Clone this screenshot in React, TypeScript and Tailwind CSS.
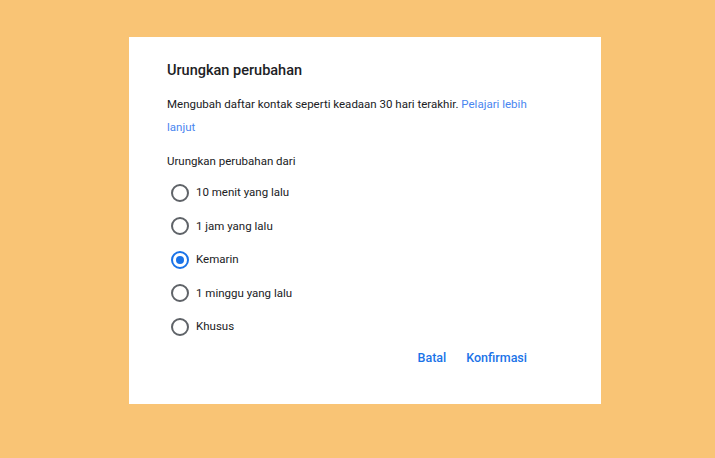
import { useState } from "react";

const OPTIONS = ["10 menit yang lalu", "1 jam yang lalu", "Kemarin", "1 minggu yang lalu", "Khusus"];

function Radio({ checked }: { checked: boolean }) {
  return (
    <span
      className={`flex h-[18px] w-[18px] shrink-0 items-center justify-center rounded-full border-2 ${
        checked ? "border-[#1a73e8]" : "border-[#5f6368]"
      }`}
    >
      {checked && <span className="h-[8px] w-[8px] rounded-full bg-[#1a73e8]" />}
    </span>
  );
}

export default function App() {
  const [selected, setSelected] = useState(2);

  return (
    <div
      className="flex h-[458px] w-[715px] items-start bg-[#f9c475] pl-[129px] pt-[37px]"
      style={{ fontFamily: "Roboto, 'Liberation Sans', sans-serif" }}
    >
      <div className="h-[367px] w-[472px] bg-white pl-[38px] pr-[38px] pt-[24px]">
        <h2 className="text-[14.5px] font-medium leading-[20px] text-[#202124]">Urungkan perubahan</h2>
        <p className="mt-[12px] w-[372px] text-[11.5px] leading-[23px] text-[#202124]">
          Mengubah daftar kontak seperti keadaan 30 hari terakhir.{" "}
          <a className="text-[#4a86f0]">Pelajari lebih lanjut</a>
        </p>
        <p className="mt-[12px] text-[11.5px] leading-[20px] text-[#202124]">Urungkan perubahan dari</p>
        <ul className="mt-[5px] flex flex-col">
          {OPTIONS.map((label, i) => (
            <li key={label}>
              <button
                type="button"
                onClick={() => setSelected(i)}
                className="flex h-[33.5px] items-center gap-[7px] pl-[4px] text-left text-[11.5px] text-[#202124]"
              >
                <Radio checked={selected === i} />
                <span>{label}</span>
              </button>
            </li>
          ))}
        </ul>
        <div className="mt-[5px] flex justify-end gap-[20px] pr-[36px] text-[12.5px] font-medium text-[#1a73e8]">
          <button type="button">Batal</button>
          <button type="button">Konfirmasi</button>
        </div>
      </div>
    </div>
  );
}
